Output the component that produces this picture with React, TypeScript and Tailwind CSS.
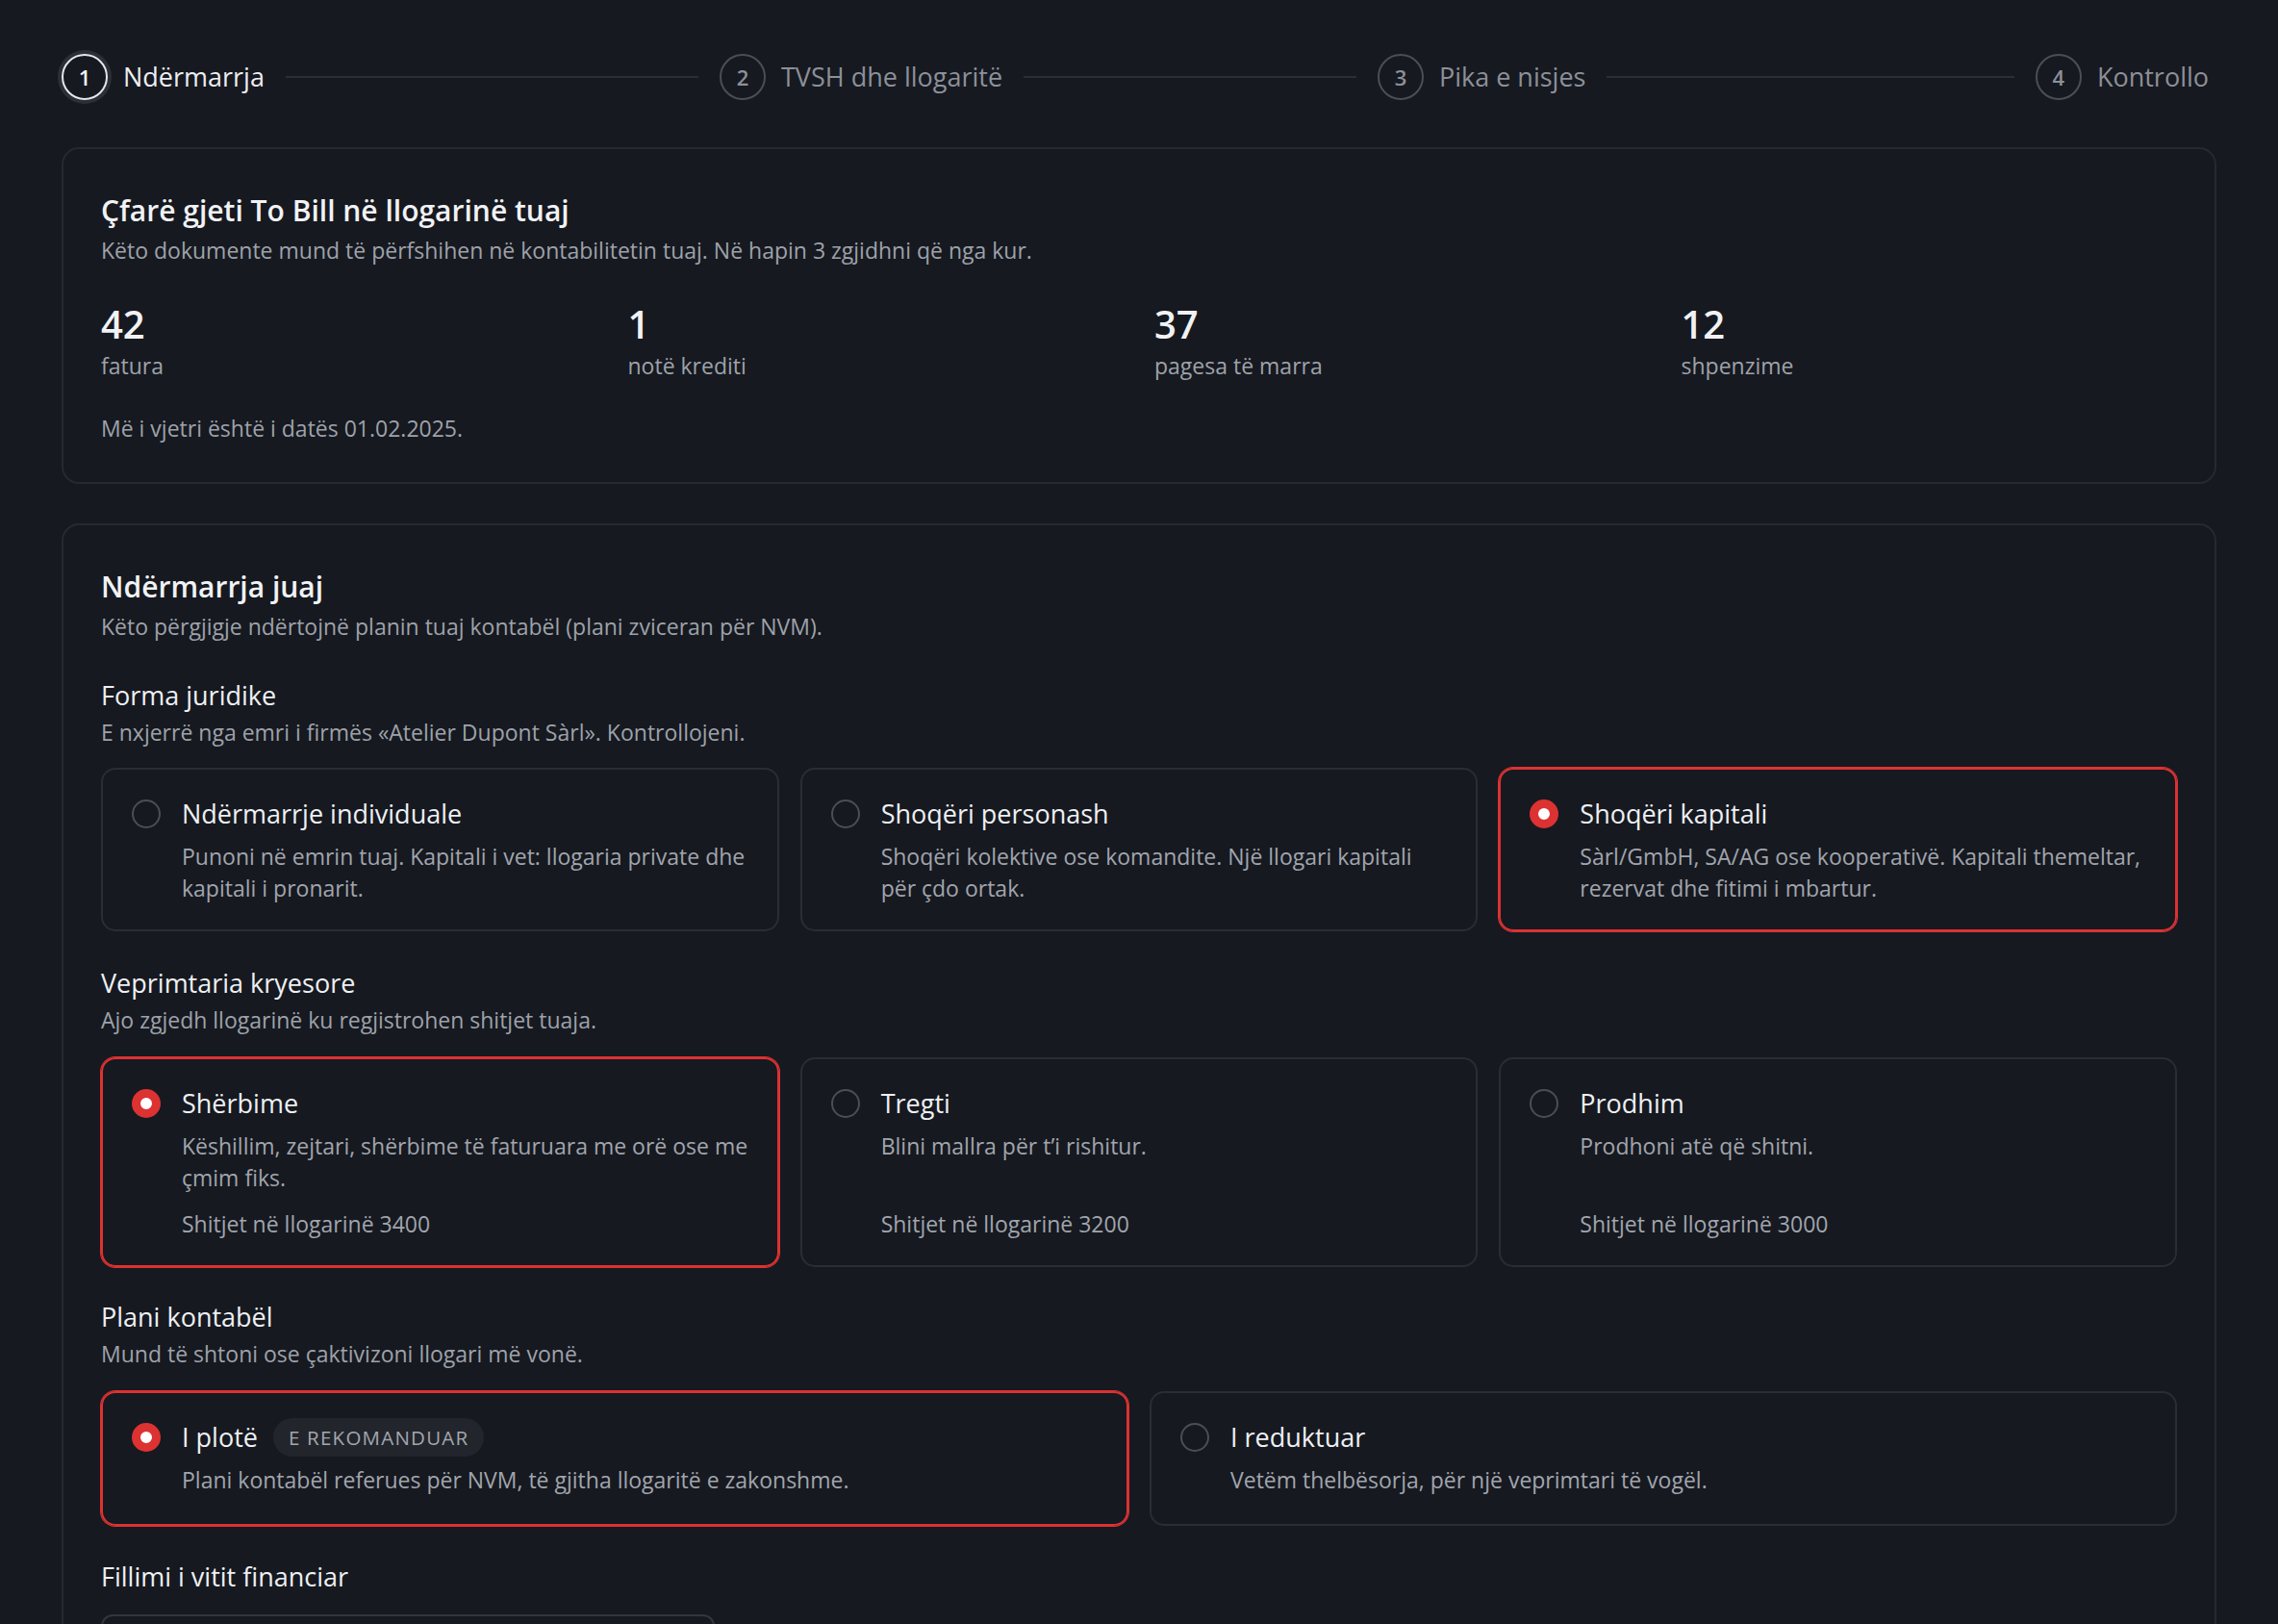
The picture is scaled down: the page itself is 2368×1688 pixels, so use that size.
import { useState } from 'react'

type Option = {
  id: string
  title: string
  desc: string
  account?: string
  badge?: string
}

const steps = ['Ndërmarrja', 'TVSH dhe llogaritë', 'Pika e nisjes', 'Kontrollo']

const legalForms: Option[] = [
  {
    id: 'individual',
    title: 'Ndërmarrje individuale',
    desc: 'Punoni në emrin tuaj. Kapitali i vet: llogaria private dhe kapitali i pronarit.',
  },
  {
    id: 'partnership',
    title: 'Shoqëri personash',
    desc: 'Shoqëri kolektive ose komandite. Një llogari kapitali për çdo ortak.',
  },
  {
    id: 'capital',
    title: 'Shoqëri kapitali',
    desc: 'Sàrl/GmbH, SA/AG ose kooperativë. Kapitali themeltar, rezervat dhe fitimi i mbartur.',
  },
]

const activities: Option[] = [
  {
    id: 'services',
    title: 'Shërbime',
    desc: 'Këshillim, zejtari, shërbime të faturuara me orë ose me çmim fiks.',
    account: 'Shitjet në llogarinë 3400',
  },
  {
    id: 'trade',
    title: 'Tregti',
    desc: 'Blini mallra për t’i rishitur.',
    account: 'Shitjet në llogarinë 3200',
  },
  {
    id: 'production',
    title: 'Prodhim',
    desc: 'Prodhoni atë që shitni.',
    account: 'Shitjet në llogarinë 3000',
  },
]

const plans: Option[] = [
  {
    id: 'full',
    title: 'I plotë',
    badge: 'E REKOMANDUAR',
    desc: 'Plani kontabël referues për NVM, të gjitha llogaritë e zakonshme.',
  },
  {
    id: 'reduced',
    title: 'I reduktuar',
    desc: 'Vetëm thelbësorja, për një veprimtari të vogël.',
  },
]

const stats = [
  { value: '42', label: 'fatura' },
  { value: '1', label: 'notë krediti' },
  { value: '37', label: 'pagesa të marra' },
  { value: '12', label: 'shpenzime' },
]

function Stepper() {
  return (
    <div className="flex h-[56px] items-center pr-[8px]">
      {steps.map((label, i) => {
        const active = i === 0
        return (
          <div key={label} className={i < steps.length - 1 ? 'flex flex-1 items-center' : 'flex items-center'}>
            <div className="flex items-center">
              <div
                className={
                  active
                    ? 'flex h-[48px] w-[48px] items-center justify-center rounded-full border-2 border-[#e6e7ea] text-[22px] font-semibold text-[#f1f2f4] ring-4 ring-[#2c2f36]'
                    : 'flex h-[48px] w-[48px] items-center justify-center rounded-full border-2 border-[#4a4e57] text-[22px] font-semibold text-[#8c9099]'
                }
              >
                {i + 1}
              </div>
              <span className={active ? 'ml-[16px] text-[27px] text-[#eceef1]' : 'ml-[16px] text-[27px] text-[#8c9099]'}>
                {label}
              </span>
            </div>
            {i < steps.length - 1 && <div className="mx-[22px] h-[2px] flex-1 bg-[#2b2e35]" />}
          </div>
        )
      })}
    </div>
  )
}

function Radio({ checked }: { checked: boolean }) {
  return (
    <span
      className={
        checked
          ? 'mt-[3px] block h-[30px] w-[30px] shrink-0 rounded-full border-[9px] border-[#dc3232] bg-white'
          : 'mt-[3px] block h-[30px] w-[30px] shrink-0 rounded-full border-2 border-[#4a4e57]'
      }
    />
  )
}

function OptionCard({
  option,
  checked,
  onPick,
  roomy,
}: {
  option: Option
  checked: boolean
  onPick: () => void
  roomy?: boolean
}) {
  return (
    <button
      type="button"
      onClick={onPick}
      className={`flex gap-[22px] rounded-[15px] border-2 pt-[28px] pr-[26px] pl-[30px] text-left ${
        roomy ? 'pb-[29px]' : 'pb-[26px]'
      } ${checked ? 'border-[#dc3232] ring-1 ring-[#dc3232]' : 'border-[#2a2d35]'}`}
    >
      <Radio checked={checked} />
      <div className="flex flex-1 flex-col">
        <div className="flex h-[36px] items-center gap-[16px]">
          <span className="text-[27px] font-medium text-[#eef0f3]">{option.title}</span>
          {option.badge && (
            <span className="flex h-[40px] items-center rounded-full bg-[#22252c] px-[16px] text-[20.5px] font-medium tracking-[0.06em] text-[#a3a7af]">
              {option.badge}
            </span>
          )}
        </div>
        <p className="mt-[10px] text-[23px] leading-[33px] text-[#a1a5ad]">{option.desc}</p>
        {option.account && (
          <p className="mt-auto pt-[15px] text-[23px] leading-[33px] text-[#a1a5ad]">{option.account}</p>
        )}
      </div>
    </button>
  )
}

function Section({ title, desc, className }: { title: string; desc?: string; className: string }) {
  return (
    <div className={className}>
      <h3 className="text-[27px] font-medium leading-[36px] text-[#eef0f3]">{title}</h3>
      {desc && <p className="mt-[4px] text-[23px] leading-[33px] text-[#9ea2aa]">{desc}</p>}
    </div>
  )
}

export default function App() {
  const [form, setForm] = useState('capital')
  const [activity, setActivity] = useState('services')
  const [plan, setPlan] = useState('full')

  return (
    <div className="min-h-screen bg-[#161920] px-[64px] pt-[52px] pb-[80px] font-['Open_Sans',sans-serif] text-[#eceef1]">
      <Stepper />

      {/* What was found in the account */}
      <section className="mt-[45px] rounded-[18px] border-2 border-[#262930] px-[39px] pt-[44px] pb-[39px]">
        <h2 className="text-[30px] font-semibold leading-[40px] text-[#f1f2f4]">Çfarë gjeti To Bill në llogarinë tuaj</h2>
        <p className="mt-[5px] text-[23px] leading-[33px] text-[#9ea2aa]">
          Këto dokumente mund të përfshihen në kontabilitetin tuaj. Në hapin 3 zgjidhni që nga kur.
        </p>
        <div className="mt-[35px] grid grid-cols-4 gap-[32px]">
          {stats.map((s) => (
            <div key={s.label}>
              <div className="text-[40px] font-semibold leading-[50px] text-[#f1f2f4]">{s.value}</div>
              <div className="mt-[2px] text-[23px] leading-[33px] text-[#9ea2aa]">{s.label}</div>
            </div>
          ))}
        </div>
        <p className="mt-[32px] text-[23px] leading-[33px] text-[#9ea2aa]">Më i vjetri është i datës 01.02.2025.</p>
      </section>

      {/* Company setup */}
      <section className="mt-[41px] rounded-[18px] border-2 border-[#262930] px-[39px] pt-[44px] pb-[40px]">
        <h2 className="text-[30px] font-semibold leading-[40px] text-[#f1f2f4]">Ndërmarrja juaj</h2>
        <p className="mt-[5px] text-[23px] leading-[33px] text-[#9ea2aa]">
          Këto përgjigje ndërtojnë planin tuaj kontabël (plani zviceran për NVM).
        </p>

        <Section
          className="mt-[37px]"
          title="Forma juridike"
          desc="E nxjerrë nga emri i firmës «Atelier Dupont Sàrl». Kontrollojeni."
        />
        <div className="mt-[20px] grid grid-cols-3 gap-[22px]">
          {legalForms.map((o) => (
            <OptionCard key={o.id} option={o} checked={form === o.id} onPick={() => setForm(o.id)} />
          ))}
        </div>

        <Section
          className="mt-[36px]"
          title="Veprimtaria kryesore"
          desc="Ajo zgjedh llogarinë ku regjistrohen shitjet tuaja."
        />
        <div className="mt-[22px] grid grid-cols-3 gap-[22px]">
          {activities.map((o) => (
            <OptionCard key={o.id} option={o} checked={activity === o.id} onPick={() => setActivity(o.id)} />
          ))}
        </div>

        <Section className="mt-[34px]" title="Plani kontabël" desc="Mund të shtoni ose çaktivizoni llogari më vonë." />
        <div className="mt-[22px] grid grid-cols-2 gap-[22px]">
          {plans.map((o) => (
            <OptionCard key={o.id} option={o} roomy checked={plan === o.id} onPick={() => setPlan(o.id)} />
          ))}
        </div>

        <Section className="mt-[35px]" title="Fillimi i vitit financiar" />
        <div className="mt-[21px] flex h-[66px] w-[638px] items-center rounded-[12px] border-2 border-[#33363e] px-[20px] text-[23px] text-[#eef0f3]">
          01.01.2025
        </div>
      </section>
    </div>
  )
}
